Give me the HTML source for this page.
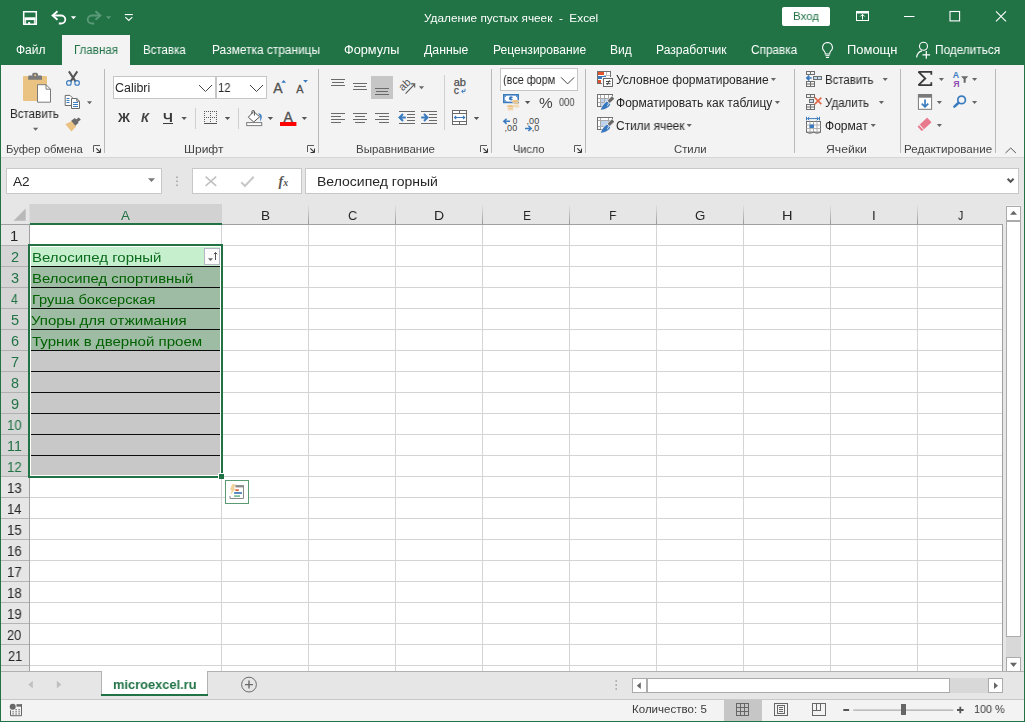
<!DOCTYPE html>
<html lang="ru"><head><meta charset="utf-8"><title>Excel</title>
<style>
html,body{margin:0;padding:0;}
body{width:1025px;height:722px;position:relative;overflow:hidden;background:#fff;font-family:"Liberation Sans", sans-serif;}
#app{position:absolute;left:0;top:0;width:1025px;height:722px;overflow:hidden;}
#app div,#app svg,#app span{position:absolute;}
.t{white-space:pre;line-height:1;transform-origin:0 0;display:block;will-change:transform;}
</style></head>
<body><div id="app">
<div style="left:0px;top:0px;width:1025px;height:65px;background:#217346;"></div>
<div style="left:0px;top:65px;width:1025px;height:92px;background:#f3f3f3;"></div>
<div style="left:0px;top:157px;width:1025px;height:1px;background:#d6d6d6;"></div>
<div style="left:0px;top:158px;width:1025px;height:47px;background:#e6e6e6;"></div>
<div style="left:62px;top:35px;width:68px;height:30px;background:#f3f3f3;"></div>
<div style="left:782px;top:7px;width:48px;height:19px;background:#fff;border-radius:2px;"></div>
<div style="left:104px;top:69px;width:1px;height:84px;background:#b9b9b9;"></div>
<div style="left:318px;top:69px;width:1px;height:84px;background:#b9b9b9;"></div>
<div style="left:491px;top:69px;width:1px;height:84px;background:#b9b9b9;"></div>
<div style="left:585px;top:69px;width:1px;height:84px;background:#b9b9b9;"></div>
<div style="left:794px;top:69px;width:1px;height:84px;background:#b9b9b9;"></div>
<div style="left:900px;top:69px;width:1px;height:84px;background:#b9b9b9;"></div>
<div style="left:995px;top:69px;width:1px;height:84px;background:#b9b9b9;"></div>
<div style="left:195px;top:108px;width:1px;height:21px;background:#d0d0d0;"></div>
<div style="left:238px;top:108px;width:1px;height:21px;background:#d0d0d0;"></div>
<div style="left:444px;top:75px;width:1px;height:55px;background:#d0d0d0;"></div>
<div style="left:113px;top:76px;width:103px;height:23px;background:#fff;box-sizing:border-box;border:1px solid #c6c6c6;"></div>
<div style="left:216px;top:76px;width:51px;height:23px;background:#fff;box-sizing:border-box;border:1px solid #c6c6c6;"></div>
<div style="left:163px;top:123px;width:10px;height:1px;background:#3b3b3b;"></div>
<div style="left:500px;top:68px;width:78px;height:23px;background:#fff;box-sizing:border-box;border:1px solid #c6c6c6;"></div>
<div style="left:371px;top:76px;width:22px;height:23px;background:#c6c6c6;"></div>
<div style="left:6px;top:168px;width:156px;height:26px;background:#fff;box-sizing:border-box;border:1px solid #c8c8c8;"></div>
<div style="left:192px;top:168px;width:110px;height:26px;background:#fff;box-sizing:border-box;border:1px solid #c8c8c8;"></div>
<div style="left:305px;top:168px;width:714px;height:26px;background:#fff;box-sizing:border-box;border:1px solid #c8c8c8;"></div>
<div style="left:1px;top:205px;width:1019px;height:466px;background:#fff;"></div>
<div style="left:1px;top:204px;width:1003px;height:20px;background:#e6e6e6;"></div>
<div style="left:1px;top:204px;width:29px;height:467px;background:#e6e6e6;"></div>
<div style="left:30px;top:204px;width:192px;height:19px;background:#d2d2d2;"></div>
<div style="left:308px;top:204px;width:1px;height:20px;background:linear-gradient(#e6e6e6,#c4c4c4 45%,#9a9a9a);"></div>
<div style="left:395px;top:204px;width:1px;height:20px;background:linear-gradient(#e6e6e6,#c4c4c4 45%,#9a9a9a);"></div>
<div style="left:482px;top:204px;width:1px;height:20px;background:linear-gradient(#e6e6e6,#c4c4c4 45%,#9a9a9a);"></div>
<div style="left:569px;top:204px;width:1px;height:20px;background:linear-gradient(#e6e6e6,#c4c4c4 45%,#9a9a9a);"></div>
<div style="left:656px;top:204px;width:1px;height:20px;background:linear-gradient(#e6e6e6,#c4c4c4 45%,#9a9a9a);"></div>
<div style="left:743px;top:204px;width:1px;height:20px;background:linear-gradient(#e6e6e6,#c4c4c4 45%,#9a9a9a);"></div>
<div style="left:830px;top:204px;width:1px;height:20px;background:linear-gradient(#e6e6e6,#c4c4c4 45%,#9a9a9a);"></div>
<div style="left:917px;top:204px;width:1px;height:20px;background:linear-gradient(#e6e6e6,#c4c4c4 45%,#9a9a9a);"></div>
<div style="left:29px;top:204px;width:1px;height:20px;background:#dcdcdc;"></div>
<div style="left:1px;top:224px;width:1002px;height:1px;background:#a0a0a0;"></div>
<div style="left:30px;top:223px;width:192px;height:2px;background:#217346;"></div>
<div style="left:29px;top:225px;width:1px;height:446px;background:#a0a0a0;"></div>
<div style="left:1002px;top:225px;width:1px;height:446px;background:#a0a0a0;"></div>
<div style="left:30px;top:245px;width:972px;height:1px;background:#d4d4d4;"></div>
<div style="left:1px;top:245px;width:28px;height:1px;background:#b4b4b4;"></div>
<div style="left:30px;top:266px;width:972px;height:1px;background:#d4d4d4;"></div>
<div style="left:1px;top:266px;width:28px;height:1px;background:#b4b4b4;"></div>
<div style="left:30px;top:287px;width:972px;height:1px;background:#d4d4d4;"></div>
<div style="left:1px;top:287px;width:28px;height:1px;background:#b4b4b4;"></div>
<div style="left:30px;top:308px;width:972px;height:1px;background:#d4d4d4;"></div>
<div style="left:1px;top:308px;width:28px;height:1px;background:#b4b4b4;"></div>
<div style="left:30px;top:329px;width:972px;height:1px;background:#d4d4d4;"></div>
<div style="left:1px;top:329px;width:28px;height:1px;background:#b4b4b4;"></div>
<div style="left:30px;top:350px;width:972px;height:1px;background:#d4d4d4;"></div>
<div style="left:1px;top:350px;width:28px;height:1px;background:#b4b4b4;"></div>
<div style="left:30px;top:371px;width:972px;height:1px;background:#d4d4d4;"></div>
<div style="left:1px;top:371px;width:28px;height:1px;background:#b4b4b4;"></div>
<div style="left:30px;top:392px;width:972px;height:1px;background:#d4d4d4;"></div>
<div style="left:1px;top:392px;width:28px;height:1px;background:#b4b4b4;"></div>
<div style="left:30px;top:413px;width:972px;height:1px;background:#d4d4d4;"></div>
<div style="left:1px;top:413px;width:28px;height:1px;background:#b4b4b4;"></div>
<div style="left:30px;top:434px;width:972px;height:1px;background:#d4d4d4;"></div>
<div style="left:1px;top:434px;width:28px;height:1px;background:#b4b4b4;"></div>
<div style="left:30px;top:455px;width:972px;height:1px;background:#d4d4d4;"></div>
<div style="left:1px;top:455px;width:28px;height:1px;background:#b4b4b4;"></div>
<div style="left:30px;top:476px;width:972px;height:1px;background:#d4d4d4;"></div>
<div style="left:1px;top:476px;width:28px;height:1px;background:#b4b4b4;"></div>
<div style="left:30px;top:497px;width:972px;height:1px;background:#d4d4d4;"></div>
<div style="left:1px;top:497px;width:28px;height:1px;background:#b4b4b4;"></div>
<div style="left:30px;top:518px;width:972px;height:1px;background:#d4d4d4;"></div>
<div style="left:1px;top:518px;width:28px;height:1px;background:#b4b4b4;"></div>
<div style="left:30px;top:539px;width:972px;height:1px;background:#d4d4d4;"></div>
<div style="left:1px;top:539px;width:28px;height:1px;background:#b4b4b4;"></div>
<div style="left:30px;top:560px;width:972px;height:1px;background:#d4d4d4;"></div>
<div style="left:1px;top:560px;width:28px;height:1px;background:#b4b4b4;"></div>
<div style="left:30px;top:581px;width:972px;height:1px;background:#d4d4d4;"></div>
<div style="left:1px;top:581px;width:28px;height:1px;background:#b4b4b4;"></div>
<div style="left:30px;top:602px;width:972px;height:1px;background:#d4d4d4;"></div>
<div style="left:1px;top:602px;width:28px;height:1px;background:#b4b4b4;"></div>
<div style="left:30px;top:623px;width:972px;height:1px;background:#d4d4d4;"></div>
<div style="left:1px;top:623px;width:28px;height:1px;background:#b4b4b4;"></div>
<div style="left:30px;top:644px;width:972px;height:1px;background:#d4d4d4;"></div>
<div style="left:1px;top:644px;width:28px;height:1px;background:#b4b4b4;"></div>
<div style="left:30px;top:665px;width:972px;height:1px;background:#d4d4d4;"></div>
<div style="left:1px;top:665px;width:28px;height:1px;background:#b4b4b4;"></div>
<div style="left:221px;top:225px;width:1px;height:446px;background:#d4d4d4;"></div>
<div style="left:308px;top:225px;width:1px;height:446px;background:#d4d4d4;"></div>
<div style="left:395px;top:225px;width:1px;height:446px;background:#d4d4d4;"></div>
<div style="left:482px;top:225px;width:1px;height:446px;background:#d4d4d4;"></div>
<div style="left:569px;top:225px;width:1px;height:446px;background:#d4d4d4;"></div>
<div style="left:656px;top:225px;width:1px;height:446px;background:#d4d4d4;"></div>
<div style="left:743px;top:225px;width:1px;height:446px;background:#d4d4d4;"></div>
<div style="left:830px;top:225px;width:1px;height:446px;background:#d4d4d4;"></div>
<div style="left:917px;top:225px;width:1px;height:446px;background:#d4d4d4;"></div>
<div style="left:1px;top:246px;width:27px;height:230px;background:#d5d5d5;"></div>
<div style="left:1px;top:266px;width:27px;height:1px;background:#b0b0b0;"></div>
<div style="left:1px;top:287px;width:27px;height:1px;background:#b0b0b0;"></div>
<div style="left:1px;top:308px;width:27px;height:1px;background:#b0b0b0;"></div>
<div style="left:1px;top:329px;width:27px;height:1px;background:#b0b0b0;"></div>
<div style="left:1px;top:350px;width:27px;height:1px;background:#b0b0b0;"></div>
<div style="left:1px;top:371px;width:27px;height:1px;background:#b0b0b0;"></div>
<div style="left:1px;top:392px;width:27px;height:1px;background:#b0b0b0;"></div>
<div style="left:1px;top:413px;width:27px;height:1px;background:#b0b0b0;"></div>
<div style="left:1px;top:434px;width:27px;height:1px;background:#b0b0b0;"></div>
<div style="left:1px;top:455px;width:27px;height:1px;background:#b0b0b0;"></div>
<div style="left:30px;top:246px;width:191px;height:230px;background:#fff;"></div>
<div style="left:31px;top:247px;width:189px;height:19px;background:#c6efce;"></div>
<div style="left:31px;top:267px;width:189px;height:84px;background:#9ebba3;"></div>
<div style="left:31px;top:351px;width:189px;height:124px;background:#c8c8c8;"></div>
<div style="left:31px;top:266px;width:189px;height:1px;background:#0c0c0c;"></div>
<div style="left:31px;top:287px;width:189px;height:1px;background:#0c0c0c;"></div>
<div style="left:31px;top:308px;width:189px;height:1px;background:#0c0c0c;"></div>
<div style="left:31px;top:329px;width:189px;height:1px;background:#0c0c0c;"></div>
<div style="left:31px;top:350px;width:189px;height:1px;background:#0c0c0c;"></div>
<div style="left:31px;top:371px;width:189px;height:1px;background:#0c0c0c;"></div>
<div style="left:31px;top:392px;width:189px;height:1px;background:#0c0c0c;"></div>
<div style="left:31px;top:413px;width:189px;height:1px;background:#0c0c0c;"></div>
<div style="left:31px;top:434px;width:189px;height:1px;background:#0c0c0c;"></div>
<div style="left:31px;top:455px;width:189px;height:1px;background:#0c0c0c;"></div>
<div style="left:28px;top:244px;width:195px;height:2px;background:#217346;"></div>
<div style="left:28px;top:476px;width:190px;height:2px;background:#217346;"></div>
<div style="left:28px;top:244px;width:2px;height:234px;background:#217346;"></div>
<div style="left:221px;top:244px;width:2px;height:229px;background:#217346;"></div>
<div style="left:218px;top:473px;width:6px;height:6px;background:#fff;"></div>
<div style="left:219px;top:474px;width:5px;height:5px;background:#217346;"></div>
<div style="left:204px;top:248px;width:16px;height:17px;background:#fbfbfb;box-sizing:border-box;border:1px solid #b4b6c2;"></div>
<div style="left:225px;top:480px;width:24px;height:24px;background:#fff;box-sizing:border-box;border:1px solid #5a9b73;"></div>
<div style="left:1003px;top:204px;width:21px;height:467px;background:#e6e6e6;"></div>
<div style="left:1006px;top:205px;width:15px;height:466px;background:#f0f0f0;"></div>
<div style="left:1px;top:671px;width:1023px;height:28px;background:#e6e6e6;"></div>
<div style="left:1px;top:671px;width:1023px;height:1px;background:#b1b1b1;"></div>
<div style="left:101px;top:671px;width:107px;height:24px;background:#fff;"></div>
<div style="left:101px;top:694px;width:107px;height:2px;background:#217346;"></div>
<div style="left:101px;top:671px;width:1px;height:23px;background:#b1b1b1;"></div>
<div style="left:207px;top:671px;width:1px;height:23px;background:#b1b1b1;"></div>
<div style="left:1px;top:699px;width:1023px;height:1px;background:#c8c8c8;"></div>
<div style="left:1px;top:700px;width:1023px;height:21px;background:#f3f3f3;"></div>
<svg style="left:0;top:0" width="1025" height="722" viewBox="0 0 1025 722"><path d="M23.700 11.700h12.600v12.600h-12.600z" fill="none" stroke="#fff" stroke-width="1.5" /><rect x="24.4" y="17.3" width="11.2" height="2.8" fill="#fff" /><rect x="24.4" y="20" width="1.7" height="4.3" fill="#fff" opacity=".85"/><rect x="33.9" y="20" width="1.7" height="4.3" fill="#fff" opacity=".85"/><rect x="28.2" y="22" width="1.9" height="2.4" fill="#fff" /><path d="M57.500 11.300l-4.900 4.200 4.900 4.200" fill="none" stroke="#fff" stroke-width="1.9" /><path d="M53 15.500h8a4.300 4 0 0 1 0 8h-2.200" fill="none" stroke="#fff" stroke-width="1.8" /><path d="M70.8 16.2h5.4l-2.7 3z" fill="#fff" stroke="none" stroke-width="1" /><path d="M95.500 11.300l4.900 4.200-4.900 4.200" fill="none" stroke="#5a9a78" stroke-width="1.9" /><path d="M100 15.500h-8a4.300 4 0 0 0 0 8h2.200" fill="none" stroke="#5a9a78" stroke-width="1.8" /><path d="M106 16.2h5.2l-2.6 3z" fill="#5a9a78" stroke="none" stroke-width="1" /><rect x="124.8" y="14" width="8" height="1.1" fill="#fff" /><path d="M125.3 17.2l3.5 3.3 3.5-3.3" fill="none" stroke="#fff" stroke-width="1.1" /><rect x="856.5" y="11.5" width="12" height="9" fill="none" stroke="#fff" stroke-width="1"/><rect x="856.5" y="11.5" width="12" height="2" fill="#fff" /><path d="M862.5 19.5v-5M860.3 16.5l2.2-2.2 2.2 2.2" fill="none" stroke="#fff" stroke-width="1" /><rect x="904" y="16" width="10.5" height="1" fill="#fff" /><rect x="950" y="11.5" width="9.6" height="9.4" fill="none" stroke="#fff" stroke-width="1.1"/><path d="M996 11.3l10 10M1006 11.3l-10 10" fill="none" stroke="#fff" stroke-width="1.1" /><path d="M827.5 42.5a4.9 4.9 0 0 1 3.2 8.6c-.8.8-1 1.6-1 2.9h-4.4c0-1.300-.2-2.100-1-2.900a4.9 4.9 0 0 1 3.200-8.600z" fill="none" stroke="#fff" stroke-width="1.1" /><rect x="825.4" y="55.2" width="4.2" height="1" fill="#fff" /><rect x="826" y="57" width="3" height="1" fill="#fff" /><circle cx="923.5" cy="46.3" r="4" fill="none" stroke="#fff" stroke-width="1.1"/><path d="M916.6 57.5c.6-4 3.300-6.200 5.400-6.600" fill="none" stroke="#fff" stroke-width="1.1" /><path d="M922.5 54.9h7.6M926.3 51.1v7.6" fill="none" stroke="#fff" stroke-width="1.2" /><path d="M24 76h22a1 1 0 0 1 1 1v23a1 1 0 0 1-1 1h-22a1 1 0 0 1-1-1v-23a1 1 0 0 1 1-1z" fill="#eac282" stroke="none" stroke-width="1" /><path d="M28.2 79.800v-3.400a1 1 0 0 1 1-1h3v-1.200a1.500 1.500 0 0 1 1.500-1.500h2.800a1.500 1.500 0 0 1 1.500 1.500v1.200h3a1 1 0 0 1 1 1v3.400z" fill="#7a7a7a" stroke="none" stroke-width="1" /><circle cx="35.1" cy="75.2" r="1" fill="#eac282" stroke="none" stroke-width="1"/><path d="M37.5 84.700h8.500l4.500 4.500v13h-13z" fill="#fff" stroke="#7a7a7a" stroke-width="1" /><path d="M46 84.700v4.500h4.500" fill="none" stroke="#7a7a7a" stroke-width="1" /><path d="M33 127.8h5.2l-2.6 3z" fill="#666" stroke="none" stroke-width="1" /><path d="M68.900 71.400l6.600 10M77.300 71.400l-6.600 10" fill="none" stroke="#555" stroke-width="2" /><circle cx="68.9" cy="82.9" r="2.3" fill="none" stroke="#3a7bbf" stroke-width="1.1"/><circle cx="77.1" cy="82.9" r="2.3" fill="none" stroke="#3a7bbf" stroke-width="1.1"/><path d="M65.200 95.400h4.800l2.300 2.300v7.800h-7.100z" fill="#fff" stroke="#6a6a6a" stroke-width="1" /><line x1="66.5" y1="98.5" x2="69.5" y2="98.5" stroke="#3a7bbf" stroke-width="1" stroke-linecap="butt"/><line x1="66.5" y1="100.5" x2="69.5" y2="100.5" stroke="#3a7bbf" stroke-width="1" stroke-linecap="butt"/><line x1="66.5" y1="102.5" x2="69.5" y2="102.5" stroke="#3a7bbf" stroke-width="1" stroke-linecap="butt"/><path d="M71.500 98.500h5.300l2.700 2.700v7.300h-8z" fill="#fff" stroke="#6a6a6a" stroke-width="1" /><path d="M76.800 98.500v2.700h2.700" fill="none" stroke="#6a6a6a" stroke-width="1" /><line x1="73" y1="102.5" x2="78" y2="102.5" stroke="#3a7bbf" stroke-width="1" stroke-linecap="butt"/><line x1="73" y1="104.5" x2="78" y2="104.5" stroke="#3a7bbf" stroke-width="1" stroke-linecap="butt"/><line x1="73" y1="106.5" x2="78" y2="106.5" stroke="#3a7bbf" stroke-width="1" stroke-linecap="butt"/><path d="M87 101.2h5l-2.5 3z" fill="#666" stroke="none" stroke-width="1" /><path d="M65.300 124.300l6.600-3.300 4.200 5.400-4.600 5.200z" fill="#eac282" stroke="none" stroke-width="1" /><path d="M71.200 120.800l3.600-2.800 3.800 4.700-3.300 3.100z" fill="#6a6a6a" stroke="none" stroke-width="1" /><path d="M75.500 119.700l3.400-2.300 1.900 2.300-3.300 2.500z" fill="#6a6a6a" stroke="none" stroke-width="1" /><path d="M100 145.5H93.5V152" fill="none" stroke="#5a5a5a" stroke-width="1" /><path d="M96.3 148.3L100.2 152.2" fill="none" stroke="#333" stroke-width="1.1" /><path d="M100.5 148.6V152.5H96.6" fill="none" stroke="#333" stroke-width="1" /><path d="M314 145.5H307.5V152" fill="none" stroke="#5a5a5a" stroke-width="1" /><path d="M310.3 148.3L314.2 152.2" fill="none" stroke="#333" stroke-width="1.1" /><path d="M314.5 148.6V152.5H310.6" fill="none" stroke="#333" stroke-width="1" /><path d="M487 145.5H480.5V152" fill="none" stroke="#5a5a5a" stroke-width="1" /><path d="M483.3 148.3L487.2 152.2" fill="none" stroke="#333" stroke-width="1.1" /><path d="M487.5 148.6V152.5H483.6" fill="none" stroke="#333" stroke-width="1" /><path d="M581 145.5H574.5V152" fill="none" stroke="#5a5a5a" stroke-width="1" /><path d="M577.3 148.3L581.2 152.2" fill="none" stroke="#333" stroke-width="1.1" /><path d="M581.5 148.6V152.5H577.6" fill="none" stroke="#333" stroke-width="1" /><path d="M199 85l6.500 6.500 6.500-6.500" fill="none" stroke="#444" stroke-width="1" /><path d="M250 85l6.500 6.500 6.500-6.500" fill="none" stroke="#444" stroke-width="1" /><text x="273.2" y="92.8" font-size="14" fill="#505050" font-family='"Liberation Sans",sans-serif' stroke="#505050" stroke-width=".3">A</text><path d="M281.300 82.700l2.400-2.800 2.400 2.800z" fill="#3a7bbf" stroke="none" stroke-width="1" /><text x="296.2" y="92.8" font-size="10.8" fill="#505050" font-family='"Liberation Sans",sans-serif' stroke="#505050" stroke-width=".3">A</text><path d="M303.100 79.900h4.800l-2.400 2.800z" fill="#3a7bbf" stroke="none" stroke-width="1" /><path d="M181.4 116.9h5.4l-2.7 3.1z" fill="#555" stroke="none" stroke-width="1" /><rect x="204" y="111" width="1" height="1" fill="#5a5a5a" /><rect x="206" y="111" width="1" height="1" fill="#5a5a5a" /><rect x="208" y="111" width="1" height="1" fill="#5a5a5a" /><rect x="210" y="111" width="1" height="1" fill="#5a5a5a" /><rect x="212" y="111" width="1" height="1" fill="#5a5a5a" /><rect x="214" y="111" width="1" height="1" fill="#5a5a5a" /><rect x="216" y="111" width="1" height="1" fill="#5a5a5a" /><rect x="204" y="113" width="1" height="1" fill="#5a5a5a" /><rect x="210" y="113" width="1" height="1" fill="#5a5a5a" /><rect x="216" y="113" width="1" height="1" fill="#5a5a5a" /><rect x="204" y="115" width="1" height="1" fill="#5a5a5a" /><rect x="210" y="115" width="1" height="1" fill="#5a5a5a" /><rect x="216" y="115" width="1" height="1" fill="#5a5a5a" /><rect x="204" y="117" width="1" height="1" fill="#5a5a5a" /><rect x="206" y="117" width="1" height="1" fill="#5a5a5a" /><rect x="208" y="117" width="1" height="1" fill="#5a5a5a" /><rect x="210" y="117" width="1" height="1" fill="#5a5a5a" /><rect x="212" y="117" width="1" height="1" fill="#5a5a5a" /><rect x="214" y="117" width="1" height="1" fill="#5a5a5a" /><rect x="216" y="117" width="1" height="1" fill="#5a5a5a" /><rect x="204" y="119" width="1" height="1" fill="#5a5a5a" /><rect x="210" y="119" width="1" height="1" fill="#5a5a5a" /><rect x="216" y="119" width="1" height="1" fill="#5a5a5a" /><rect x="204" y="121" width="1" height="1" fill="#5a5a5a" /><rect x="210" y="121" width="1" height="1" fill="#5a5a5a" /><rect x="216" y="121" width="1" height="1" fill="#5a5a5a" /><rect x="204" y="123" width="13" height="1" fill="#555" /><path d="M224.8 116.9h5.4l-2.7 3.1z" fill="#555" stroke="none" stroke-width="1" /><rect x="246.7" y="122.6" width="15" height="3" fill="#fff" stroke="#7a7a7a" stroke-width="1"/><path d="M253.700 111.600l6 5.200-6 5.200-5.400-4.800z" fill="#fff" stroke="#555" stroke-width="1" /><path d="M251.900 114v-2.600a.8.8 0 0 1 .8-.8h.9a.8.8 0 0 1 .8.8v4.200" fill="none" stroke="#555" stroke-width="1" /><path d="M258.200 113.300C261.600 113.600 263.500 117 260 121.500L260.300 116.700z" fill="#3a7bbf" stroke="none" stroke-width="1" /><path d="M267.7 116.9h5.4l-2.7 3.1z" fill="#555" stroke="none" stroke-width="1" /><text x="283.4" y="121.8" font-size="14" fill="#505050" font-family='"Liberation Sans",sans-serif' stroke="#505050" stroke-width=".3">A</text><rect x="280" y="122" width="16.4" height="4" fill="#ff0000" /><path d="M301.7 116.9h5.4l-2.7 3.1z" fill="#555" stroke="none" stroke-width="1" /><rect x="331" y="79" width="14" height="1" fill="#6a6a6a" /><rect x="332" y="82" width="12" height="1" fill="#6a6a6a" /><rect x="331" y="85" width="14" height="1" fill="#6a6a6a" /><rect x="353" y="83" width="14" height="1" fill="#6a6a6a" /><rect x="354" y="86" width="12" height="1" fill="#6a6a6a" /><rect x="353" y="89" width="14" height="1" fill="#6a6a6a" /><rect x="375" y="88" width="14" height="1" fill="#6a6a6a" /><rect x="376" y="91" width="12" height="1" fill="#6a6a6a" /><rect x="375" y="94" width="14" height="1" fill="#6a6a6a" /><rect x="331" y="113" width="14" height="1" fill="#6a6a6a" /><rect x="353" y="113" width="14" height="1" fill="#6a6a6a" /><rect x="375" y="113" width="14" height="1" fill="#6a6a6a" /><rect x="331" y="116" width="10" height="1" fill="#6a6a6a" /><rect x="355" y="116" width="10" height="1" fill="#6a6a6a" /><rect x="379" y="116" width="10" height="1" fill="#6a6a6a" /><rect x="331" y="119" width="14" height="1" fill="#6a6a6a" /><rect x="353" y="119" width="14" height="1" fill="#6a6a6a" /><rect x="375" y="119" width="14" height="1" fill="#6a6a6a" /><rect x="331" y="122" width="10" height="1" fill="#6a6a6a" /><rect x="355" y="122" width="10" height="1" fill="#6a6a6a" /><rect x="379" y="122" width="10" height="1" fill="#6a6a6a" /><text transform="translate(402.800 91.600) rotate(-45)" font-size="11" fill="#555" font-family='"Liberation Sans",sans-serif'>ab</text><path d="M405.600 93.600l8.800-9.200" fill="none" stroke="#555" stroke-width="1.1" /><path d="M411 83.900h3.700v3.700" fill="none" stroke="#555" stroke-width="1.1" /><path d="M418.9 86.2h5.2l-2.6 3z" fill="#666" stroke="none" stroke-width="1" /><text x="453.7" y="86.3" font-size="10.4" fill="#505050" font-family='"Liberation Sans",sans-serif' stroke="#505050" stroke-width=".25" textLength="12.3" lengthAdjust="spacingAndGlyphs">ab</text><text x="453.7" y="93.5" font-size="10.4" fill="#505050" font-family='"Liberation Sans",sans-serif' stroke="#505050" stroke-width=".25">c</text><path d="M465 88.800v2.600h-3.200M463.300 89.800l-1.700 1.600 1.700 1.600" fill="none" stroke="#3a7bbf" stroke-width="1" /><rect x="399" y="111" width="16" height="1" fill="#6a6a6a" /><rect x="399" y="123" width="16" height="1" fill="#6a6a6a" /><rect x="407" y="114" width="8" height="1" fill="#6a6a6a" /><rect x="407" y="117" width="8" height="1" fill="#6a6a6a" /><rect x="407" y="120" width="8" height="1" fill="#6a6a6a" /><rect x="421" y="111" width="16" height="1" fill="#6a6a6a" /><rect x="421" y="123" width="16" height="1" fill="#6a6a6a" /><rect x="429" y="114" width="8" height="1" fill="#6a6a6a" /><rect x="429" y="117" width="8" height="1" fill="#6a6a6a" /><rect x="429" y="120" width="8" height="1" fill="#6a6a6a" /><path d="M405.800 117.500h-5M403 114l-3.500 3.500 3.500 3.500" fill="none" stroke="#3a7bbf" stroke-width="2" /><path d="M421.200 117.500h5M424 114l3.500 3.500-3.500 3.500" fill="none" stroke="#3a7bbf" stroke-width="2" /><rect x="452.5" y="110.5" width="14" height="14" fill="#fff" stroke="#6a6a6a" stroke-width="1"/><line x1="452.5" y1="113.5" x2="466.5" y2="113.5" stroke="#6a6a6a" stroke-width="1" stroke-linecap="butt"/><line x1="452.5" y1="121.5" x2="466.5" y2="121.5" stroke="#6a6a6a" stroke-width="1" stroke-linecap="butt"/><line x1="459.5" y1="110.5" x2="459.5" y2="113.5" stroke="#6a6a6a" stroke-width="1" stroke-linecap="butt"/><line x1="459.5" y1="121.5" x2="459.5" y2="124.5" stroke="#6a6a6a" stroke-width="1" stroke-linecap="butt"/><path d="M454.600 117.500h10M456.200 115.900l-1.700 1.600 1.700 1.600M463 115.900l1.700 1.600-1.700 1.600" fill="none" stroke="#3a7bbf" stroke-width="1.1" /><path d="M473.8 117h5.4l-2.7 3.1z" fill="#555" stroke="none" stroke-width="1" /><path d="M561 77.300l6.600 6.600 6.600-6.600" fill="none" stroke="#444" stroke-width="1" /><rect x="503.8" y="94.8" width="14.4" height="7.6" fill="#fff" stroke="#3a7bbf" stroke-width="1.6"/><path d="M504.6 95.6h2.2l-2.2 2.2z" fill="#3a7bbf" stroke="none" stroke-width="1" /><path d="M517.4 95.6h-2.2l2.2 2.2z" fill="#3a7bbf" stroke="none" stroke-width="1" /><path d="M504.6 101.6h2.2l-2.2 -2.2z" fill="#3a7bbf" stroke="none" stroke-width="1" /><path d="M517.4 101.6h-2.2l2.2 -2.2z" fill="#3a7bbf" stroke="none" stroke-width="1" /><circle cx="511" cy="98.4" r="2.1" fill="#3a7bbf" stroke="none" stroke-width="1"/><path d="M511 98.400l2.300-1v2z" fill="#fff" stroke="none" stroke-width="1" /><ellipse cx="515.4" cy="101.2" rx="3.7" ry="1.5" fill="#ecc07c" stroke="#f3f3f3" stroke-width=".5"/><rect x="513.6" y="103.2" width="5.2" height="0.8" fill="#ecc07c" rx=".4"/><rect x="513.9200000000001" y="104.8" width="5.2" height="0.8" fill="#ecc07c" rx=".4"/><rect x="514.24" y="106.4" width="5.2" height="0.8" fill="#ecc07c" rx=".4"/><ellipse cx="510.5" cy="106.3" rx="3.7" ry="1.5" fill="#ecc07c" stroke="#f3f3f3" stroke-width=".5"/><rect x="507.6" y="108.2" width="5.8" height="0.8" fill="#ecc07c" rx=".4"/><rect x="507.6" y="109.5" width="5.8" height="0.8" fill="#ecc07c" rx=".4"/><path d="M524.9 101h5.4l-2.7 3.1z" fill="#555" stroke="none" stroke-width="1" /><path d="M510 121.300h-6.300M506.600 118.700l-2.800 2.600 2.800 2.600" fill="none" stroke="#3a7bbf" stroke-width="1.5" /><text x="512.8" y="123.9" font-size="8.2" fill="#444" font-family='"Liberation Sans",sans-serif' >0</text><text x="504.6" y="130.9" font-size="8.2" fill="#444" font-family='"Liberation Sans",sans-serif' textLength="12.6" lengthAdjust="spacingAndGlyphs">,00</text><text x="526.6" y="123.9" font-size="8.2" fill="#444" font-family='"Liberation Sans",sans-serif' textLength="12.6" lengthAdjust="spacingAndGlyphs">,00</text><path d="M525 128.400h6.300M528.400 125.800l2.800 2.600-2.800 2.600" fill="none" stroke="#3a7bbf" stroke-width="1.5" /><text x="531.7" y="130.9" font-size="8.2" fill="#444" font-family='"Liberation Sans",sans-serif' textLength="7.5" lengthAdjust="spacingAndGlyphs">,0</text><rect x="597.5" y="71.5" width="13" height="12" fill="#fff" stroke="#707070" stroke-width="1"/><line x1="606.5" y1="72" x2="606.5" y2="75.5" stroke="#c0c0c0" stroke-width="1" stroke-linecap="butt"/><line x1="604" y1="75.5" x2="610" y2="75.5" stroke="#c0c0c0" stroke-width="1" stroke-linecap="butt"/><rect x="598" y="72" width="6" height="3" fill="#e0532a" /><rect x="598" y="76" width="8" height="3" fill="#3d78b8" /><rect x="598" y="80" width="3" height="3" fill="#e0532a" /><rect x="602" y="77" width="12" height="11" fill="#f3f3f3" /><rect x="603.5" y="78.5" width="9" height="8" fill="#fff" stroke="#6a6a6a" stroke-width="1"/><path d="M606 81.500h4.600M606 83.700h4.600M609.500 80.200l-2.400 4.800" fill="none" stroke="#3a3a3a" stroke-width="0.9" /><rect x="597.5" y="94.5" width="15" height="12" fill="#fff" stroke="#707070" stroke-width="1"/><rect x="601" y="99" width="7.5" height="7.5" fill="#bdd4ec" /><line x1="600.5" y1="94.5" x2="600.5" y2="106.5" stroke="#a8a8a8" stroke-width="1" stroke-linecap="butt"/><line x1="604.5" y1="94.5" x2="604.5" y2="106.5" stroke="#a8a8a8" stroke-width="1" stroke-linecap="butt"/><line x1="608.5" y1="94.5" x2="608.5" y2="106.5" stroke="#a8a8a8" stroke-width="1" stroke-linecap="butt"/><line x1="597.5" y1="98.5" x2="612.5" y2="98.5" stroke="#a8a8a8" stroke-width="1" stroke-linecap="butt"/><line x1="597.5" y1="102.5" x2="612.5" y2="102.5" stroke="#a8a8a8" stroke-width="1" stroke-linecap="butt"/><rect x="597.5" y="94.5" width="15" height="12" fill="none" stroke="#707070" stroke-width="1"/><path d="M614 96.5V108.0H604L609 101.5z" fill="#f3f3f3" stroke="none" stroke-width="1" /><g transform="translate(600.8 109.8) rotate(-45)"><path d="M0 0C2.500-1.300 6-2.300 10-1.700L11.200 2C9.500 4.400 4.500 3.600 0 0z" fill="#3a78bd" stroke="#f3f3f3" stroke-width="1.2" paint-order="stroke"/><rect x="11.1" y="-1.6" width="6.3" height="3.2" fill="#6a6a6a" stroke="#f3f3f3" stroke-width="1.2" paint-order="stroke"/><path d="M7.200 1.800c1.200.300 2.200-.200 2.600-1.200" fill="none" stroke="#fff" stroke-width=".8"/></g><rect x="597.5" y="117.5" width="15" height="12" fill="#fff" stroke="#707070" stroke-width="1"/><rect x="601" y="121" width="7.5" height="5.5" fill="#bdd4ec" /><line x1="600.5" y1="117.5" x2="600.5" y2="129.5" stroke="#a8a8a8" stroke-width="1" stroke-linecap="butt"/><line x1="608.5" y1="117.5" x2="608.5" y2="129.5" stroke="#a8a8a8" stroke-width="1" stroke-linecap="butt"/><line x1="597.5" y1="120.5" x2="612.5" y2="120.5" stroke="#a8a8a8" stroke-width="1" stroke-linecap="butt"/><line x1="597.5" y1="126.5" x2="612.5" y2="126.5" stroke="#a8a8a8" stroke-width="1" stroke-linecap="butt"/><rect x="597.5" y="117.5" width="15" height="12" fill="none" stroke="#707070" stroke-width="1"/><path d="M614 119.5V131.0H604L609 124.5z" fill="#f3f3f3" stroke="none" stroke-width="1" /><g transform="translate(600.8 132.8) rotate(-45)"><path d="M0 0C2.500-1.300 6-2.300 10-1.700L11.200 2C9.500 4.400 4.500 3.600 0 0z" fill="#3a78bd" stroke="#f3f3f3" stroke-width="1.2" paint-order="stroke"/><rect x="11.1" y="-1.6" width="6.3" height="3.2" fill="#6a6a6a" stroke="#f3f3f3" stroke-width="1.2" paint-order="stroke"/><path d="M7.200 1.800c1.200.300 2.200-.200 2.600-1.200" fill="none" stroke="#fff" stroke-width=".8"/></g><rect x="806.5" y="71.5" width="8" height="3" fill="none" stroke="#6e6e6e" stroke-width="1"/><line x1="810.5" y1="71.5" x2="810.5" y2="74.5" stroke="#6e6e6e" stroke-width="1" stroke-linecap="butt"/><rect x="813.5" y="76.5" width="8" height="3" fill="#c3d9f0" stroke="#6e6e6e" stroke-width="1"/><line x1="817.5" y1="76.5" x2="817.5" y2="79.5" stroke="#6e6e6e" stroke-width="1" stroke-linecap="butt"/><rect x="806.5" y="81.5" width="8" height="5" fill="none" stroke="#6e6e6e" stroke-width="1"/><line x1="810.5" y1="81.5" x2="810.5" y2="86.5" stroke="#6e6e6e" stroke-width="1" stroke-linecap="butt"/><line x1="806.5" y1="84.0" x2="814.5" y2="84.0" stroke="#6e6e6e" stroke-width="1" stroke-linecap="butt"/><path d="M811.700 78h-4.300M809.300 75.700l-2.400 2.300 2.400 2.300" fill="none" stroke="#3a78bd" stroke-width="1.7" /><rect x="806.5" y="94.5" width="8" height="3" fill="none" stroke="#6e6e6e" stroke-width="1"/><line x1="810.5" y1="94.5" x2="810.5" y2="97.5" stroke="#6e6e6e" stroke-width="1" stroke-linecap="butt"/><rect x="809.5" y="99.5" width="4" height="3" fill="#c3d9f0" stroke="#6e6e6e" stroke-width="1"/><rect x="806.5" y="104.5" width="8" height="5" fill="none" stroke="#6e6e6e" stroke-width="1"/><line x1="810.5" y1="104.5" x2="810.5" y2="109.5" stroke="#6e6e6e" stroke-width="1" stroke-linecap="butt"/><line x1="806.5" y1="107.0" x2="814.5" y2="107.0" stroke="#6e6e6e" stroke-width="1" stroke-linecap="butt"/><path d="M814.800 97.700l6.500 6.500M821.300 97.700l-6.500 6.500" fill="none" stroke="#e0694a" stroke-width="1.7" /><path d="M806.500 116.800v3.600M819.500 116.800v3.600M807.500 118.600h11M809.300 117l-1.800 1.600 1.800 1.600M816.700 117l1.800 1.600-1.800 1.600" fill="none" stroke="#3a7bbf" stroke-width="1" /><rect x="806.5" y="121.5" width="14" height="10.6" fill="#fff" stroke="#6e6e6e" stroke-width="1"/><line x1="810.0" y1="121.5" x2="810.0" y2="132.1" stroke="#b0b0b0" stroke-width="1" stroke-linecap="butt"/><line x1="813.5" y1="121.5" x2="813.5" y2="132.1" stroke="#b0b0b0" stroke-width="1" stroke-linecap="butt"/><line x1="817.0" y1="121.5" x2="817.0" y2="132.1" stroke="#b0b0b0" stroke-width="1" stroke-linecap="butt"/><line x1="806.5" y1="125.03" x2="820.5" y2="125.03" stroke="#b0b0b0" stroke-width="1" stroke-linecap="butt"/><line x1="806.5" y1="128.56" x2="820.5" y2="128.56" stroke="#b0b0b0" stroke-width="1" stroke-linecap="butt"/><rect x="809.5" y="124.5" width="4.4" height="3.5" fill="#3a7bbf" /><path d="M806.500 132.100c2.300 1.500 4.700 1.500 7 0c2.300 1.500 4.700 1.500 7 0" fill="none" stroke="#6e6e6e" stroke-width="1" /><path d="M882.6 78h5.2l-2.6 3z" fill="#666" stroke="none" stroke-width="1" /><path d="M878.8 101h5.2l-2.6 3z" fill="#666" stroke="none" stroke-width="1" /><path d="M870.6 124h5.2l-2.6 3z" fill="#666" stroke="none" stroke-width="1" /><path d="M770.8 78h5.2l-2.6 3z" fill="#666" stroke="none" stroke-width="1" /><path d="M774.8 101h5.2l-2.6 3z" fill="#666" stroke="none" stroke-width="1" /><path d="M686.6 124h5.2l-2.6 3z" fill="#666" stroke="none" stroke-width="1" /><path d="M931.300 74.800v-2.900h-12.800l6.800 6.600-6.800 6.600h12.800v-2.900" fill="none" stroke="#3a3a3a" stroke-width="1.8" stroke-linejoin="miter" stroke-miterlimit="1.5"/><path d="M938.8 78h5.2l-2.6 3z" fill="#666" stroke="none" stroke-width="1" /><text x="952.8" y="77.7" font-size="8.8" fill="#3a7bbf" font-family='"Liberation Sans",sans-serif' font-weight="bold">A</text><text x="953.2" y="87" font-size="8.8" fill="#8e4fb0" font-family='"Liberation Sans",sans-serif' font-weight="bold">Я</text><path d="M961 76.200h7.300l-2.600 2.700v3.900h-2.100v-3.900z" fill="#6a6a6a" stroke="none" stroke-width="1" /><path d="M972 78h5.2l-2.6 3z" fill="#666" stroke="none" stroke-width="1" /><rect x="918.4" y="94.5" width="13.2" height="14.8" fill="#fff" stroke="#7a7a7a" stroke-width="1"/><rect x="918.4" y="94.5" width="13.2" height="3.2" fill="#7a7a7a" /><path d="M925 99.600v7M921.700 103.600l3.300 3.200 3.300-3.200" fill="none" stroke="#3a7bbf" stroke-width="1.7" /><path d="M936.8 101h5.2l-2.6 3z" fill="#666" stroke="none" stroke-width="1" /><circle cx="961.6" cy="99.9" r="3.8" fill="none" stroke="#3a7bbf" stroke-width="1.7"/><line x1="958.6" y1="102.8" x2="954.4" y2="106.6" stroke="#3a7bbf" stroke-width="2.5" stroke-linecap="round"/><path d="M972 101h5.2l-2.6 3z" fill="#666" stroke="none" stroke-width="1" /><g transform="translate(924.5 124.4) rotate(-43)"><rect x="-6.6" y="-3.2" width="13.2" height="6.4" rx=".6" fill="#e97a8e"/><rect x="-4.5" y="-3.2" width=".9" height="6.4" fill="#f3f3f3"/></g><path d="M936.8 124h5.2l-2.6 3z" fill="#666" stroke="none" stroke-width="1" /><path d="M1005.500 153l5.200-5 5.200 5" fill="none" stroke="#555" stroke-width="1" /><path d="M148 178.200h7l-3.500 3.800z" fill="#777" stroke="none" stroke-width="1" /><rect x="176.2" y="176.5" width="1.6" height="1.6" fill="#a6a6a6" /><rect x="176.2" y="180.5" width="1.6" height="1.6" fill="#a6a6a6" /><rect x="176.2" y="184.5" width="1.6" height="1.6" fill="#a6a6a6" /><path d="M205.600 176.600l10.600 9.300M216.200 176.600l-10.600 9.300" fill="none" stroke="#c0c0c0" stroke-width="1.5" /><path d="M241.300 182.300l3.600 3.700 8.800-9.300" fill="none" stroke="#c8c8c8" stroke-width="2.1" /><text x="278.5" y="186" font-size="14" font-style="italic" font-weight="bold" fill="#555" font-family='"Liberation Serif",serif'>f</text><text x="283.3" y="186.2" font-size="10" font-style="italic" font-weight="bold" fill="#555" font-family='"Liberation Serif",serif'>x</text><path d="M1007.600 178.800l3 3 3-3" fill="none" stroke="#555" stroke-width="2" /><path d="M25.700 208.500v12.200h-12.200z" fill="#b9b9b9" stroke="none" stroke-width="1" /><path d="M208 258.200h5l-2.500 2.800z" fill="#666" stroke="none" stroke-width="1" /><path d="M215.500 260v-7.500M213.800 254.200l1.700-1.700 1.700 1.700" fill="none" stroke="#555" stroke-width="1" /><path d="M232 484.300h3.800l-2 4.200h2l-5.600 6.400 1.600-4.800h-1.800z" fill="#f0d39c" stroke="none" stroke-width="1" /><rect x="235.4" y="485.1" width="8.6" height="2.3" fill="#8a8a8a" /><path d="M243.500 487v11.500h-13.500v-2.500" fill="none" stroke="#8a8a8a" stroke-width="1" /><rect x="235.4" y="489.3" width="3.4" height="1.6" fill="#d9532c" /><rect x="234.1" y="492.1" width="7.8" height="1.8" fill="#4a7ebb" /><rect x="234.1" y="495.2" width="5.9" height="1.8" fill="#7fbf9c" /><rect x="1006.5" y="206.5" width="14" height="14" fill="#fff" stroke="#ababab" stroke-width="1"/><path d="M1010 214.800h7l-3.500-4.100z" fill="#666" stroke="none" stroke-width="1" /><rect x="1006.5" y="221.5" width="14" height="415" fill="#fff" stroke="#ababab" stroke-width="1"/><rect x="1006" y="637" width="15" height="20" fill="#d8d8d8" /><rect x="1006.5" y="657.5" width="14" height="14" fill="#fff" stroke="#ababab" stroke-width="1"/><path d="M1010 662.800h7l-3.500 4.100z" fill="#666" stroke="none" stroke-width="1" /><rect x="615.4" y="680.2" width="1.6" height="1.6" fill="#a6a6a6" /><rect x="615.4" y="684.2" width="1.6" height="1.6" fill="#a6a6a6" /><rect x="615.4" y="688.2" width="1.6" height="1.6" fill="#a6a6a6" /><rect x="632.5" y="678.5" width="14" height="14" fill="#fff" stroke="#ababab" stroke-width="1"/><path d="M640.800 682.300v6.800l-4-3.400z" fill="#666" stroke="none" stroke-width="1" /><rect x="647.5" y="678.5" width="302" height="14" fill="#fff" stroke="#ababab" stroke-width="1"/><rect x="950" y="678" width="38" height="15" fill="#d8d8d8" /><rect x="988.5" y="678.5" width="14" height="14" fill="#fff" stroke="#ababab" stroke-width="1"/><path d="M994 682.300v6.800l4-3.400z" fill="#666" stroke="none" stroke-width="1" /><path d="M32.800 680.800v7.600l-4.600-3.800z" fill="#c0c0c0" stroke="none" stroke-width="1" /><path d="M56.800 680.800v7.600l4.600-3.800z" fill="#c0c0c0" stroke="none" stroke-width="1" /><circle cx="249" cy="684.6" r="7.4" fill="none" stroke="#6a6a6a" stroke-width="1"/><path d="M245 684.600h8M249 680.600v8" fill="none" stroke="#6a6a6a" stroke-width="1.4" /><circle cx="12.7" cy="706.8" r="3" fill="#666" stroke="none" stroke-width="1"/><rect x="16.5" y="704.2" width="5.5" height="2.4" fill="#666" /><path d="M10.500 710.300v5.400h11v-11.500" fill="none" stroke="#666" stroke-width="1" /><rect x="15.3" y="709.3" width="1.7" height="0.9" fill="#666" /><rect x="18.3" y="709.3" width="1.7" height="0.9" fill="#666" /><rect x="12.3" y="711.4" width="1.7" height="0.9" fill="#666" /><rect x="15.3" y="711.4" width="1.7" height="0.9" fill="#666" /><rect x="18.3" y="711.4" width="1.7" height="0.9" fill="#666" /><rect x="12.3" y="713.5" width="1.7" height="0.9" fill="#666" /><rect x="15.3" y="713.5" width="1.7" height="0.9" fill="#666" /><rect x="18.3" y="713.5" width="1.7" height="0.9" fill="#666" /><rect x="724" y="700" width="38" height="21" fill="#c6c6c6" /><rect x="736.5" y="703.5" width="12" height="12" fill="none" stroke="#666" stroke-width="1"/><line x1="740.5" y1="703.5" x2="740.5" y2="715.5" stroke="#666" stroke-width="1" stroke-linecap="butt"/><line x1="744.5" y1="703.5" x2="744.5" y2="715.5" stroke="#666" stroke-width="1" stroke-linecap="butt"/><line x1="736.5" y1="707.5" x2="748.5" y2="707.5" stroke="#666" stroke-width="1" stroke-linecap="butt"/><line x1="736.5" y1="711.5" x2="748.5" y2="711.5" stroke="#666" stroke-width="1" stroke-linecap="butt"/><rect x="774.5" y="703.5" width="13" height="12" fill="none" stroke="#666" stroke-width="1"/><rect x="777.5" y="705.5" width="7" height="8" fill="none" stroke="#666" stroke-width="1"/><rect x="779" y="707" width="4" height="1" fill="#666" /><rect x="779" y="709" width="4" height="1" fill="#666" /><rect x="779" y="711" width="4" height="1" fill="#666" /><rect x="812.5" y="703.5" width="13" height="12" fill="none" stroke="#666" stroke-width="1"/><path d="M816.500 703.500v7M820.500 703.500v7M812.500 710.500h8.500" fill="none" stroke="#666" stroke-width="1" /><rect x="843.3" y="709" width="5.8" height="2" fill="#555" /><rect x="853.3" y="709.6" width="100" height="1" fill="#9a9a9a" /><rect x="901" y="704" width="5" height="11" fill="#666" /><path d="M957 710h6.600M960.300 706.700v6.600" fill="none" stroke="#555" stroke-width="1.8" /></svg>
<div style="left:0px;top:0px;width:1px;height:722px;background:#217346;"></div>
<div style="left:1024px;top:0px;width:1px;height:722px;background:#217346;"></div>
<div style="left:0px;top:721px;width:1025px;height:1px;background:#217346;"></div>
<span class="t" style="left:423.96px;top:13.35px;font-size:11.8px;color:#fff;transform:scaleX(0.9974);">Удаление пустых ячеек  -  Excel</span>
<span class="t" style="left:792.57px;top:11.35px;font-size:11.8px;color:#217346;transform:scaleX(0.9749);">Вход</span>
<span class="t" style="left:16.10px;top:44.25px;font-size:12px;color:#fff;transform:scaleX(0.9888);">Файл</span>
<span class="t" style="left:142.54px;top:44.25px;font-size:12px;color:#fff;transform:scaleX(0.9568);">Вставка</span>
<span class="t" style="left:211.55px;top:44.25px;font-size:12px;color:#fff;transform:scaleX(0.9932);">Разметка страницы</span>
<span class="t" style="left:344.47px;top:44.25px;font-size:12px;color:#fff;transform:scaleX(1.0598);">Формулы</span>
<span class="t" style="left:424.49px;top:44.25px;font-size:12px;color:#fff;transform:scaleX(1.0228);">Данные</span>
<span class="t" style="left:492.54px;top:44.25px;font-size:12px;color:#fff;transform:scaleX(1.0049);">Рецензирование</span>
<span class="t" style="left:610.02px;top:44.25px;font-size:12px;color:#fff;transform:scaleX(0.9812);">Вид</span>
<span class="t" style="left:655.53px;top:44.25px;font-size:12px;color:#fff;transform:scaleX(1.0090);">Разработчик</span>
<span class="t" style="left:750.92px;top:44.25px;font-size:12px;color:#fff;transform:scaleX(0.9801);">Справка</span>
<span class="t" style="left:846.95px;top:44.25px;font-size:12px;color:#fff;transform:scaleX(1.0779);">Помощн</span>
<span class="t" style="left:934.60px;top:44.25px;font-size:12px;color:#fff;transform:scaleX(0.9840);">Поделиться</span>
<span class="t" style="left:74.02px;top:44.25px;font-size:12px;color:#217346;transform:scaleX(0.9622);">Главная</span>
<span class="t" style="left:5.80px;top:143.60px;font-size:11.3px;color:#444;transform:scaleX(0.9982);">Буфер обмена</span>
<span class="t" style="left:184.09px;top:143.60px;font-size:11.3px;color:#444;transform:scaleX(1.0602);">Шрифт</span>
<span class="t" style="left:356.24px;top:143.60px;font-size:11.3px;color:#444;transform:scaleX(1.0157);">Выравнивание</span>
<span class="t" style="left:513.46px;top:143.60px;font-size:11.3px;color:#444;transform:scaleX(0.9675);">Число</span>
<span class="t" style="left:673.96px;top:143.60px;font-size:11.3px;color:#444;transform:scaleX(0.9856);">Стили</span>
<span class="t" style="left:826.45px;top:143.60px;font-size:11.3px;color:#444;transform:scaleX(1.0789);">Ячейки</span>
<span class="t" style="left:903.72px;top:143.60px;font-size:11.3px;color:#444;transform:scaleX(1.0235);">Редактирование</span>
<span class="t" style="left:10.04px;top:108.25px;font-size:12px;color:#262626;transform:scaleX(0.9637);">Вставить</span>
<span class="t" style="left:115.33px;top:82.25px;font-size:12px;color:#262626;transform:scaleX(1.0351);">Calibri</span>
<span class="t" style="left:218.23px;top:82.25px;font-size:12px;color:#262626;transform:scaleX(0.9352);">12</span>
<span class="t" style="left:117.50px;top:111.25px;font-size:13px;color:#3b3b3b;transform:scaleX(1.0213);font-weight:bold;">Ж</span>
<span class="t" style="left:141.49px;top:111.25px;font-size:13px;color:#444;transform:scaleX(0.9504);font-weight:bold;font-style:italic;">К</span>
<span class="t" style="left:162.77px;top:111.25px;font-size:13px;color:#3b3b3b;transform:scaleX(1.0779);font-weight:bold;">Ч</span>
<span class="t" style="left:503.34px;top:74.25px;font-size:12px;color:#262626;transform:scaleX(0.9042);width:57.51px;overflow:hidden;">(все формат</span>
<span class="t" style="left:539.00px;top:95.25px;font-size:15px;color:#444;transform:scaleX(1.0259);">%</span>
<span class="t" style="left:559.48px;top:97.00px;font-size:10.5px;color:#444;transform:scaleX(0.8859);">000</span>
<span class="t" style="left:616.03px;top:74.25px;font-size:12px;color:#262626;transform:scaleX(0.9993);">Условное форматирование</span>
<span class="t" style="left:615.60px;top:97.25px;font-size:12px;color:#262626;transform:scaleX(1.0015);">Форматировать как таблицу</span>
<span class="t" style="left:615.92px;top:120.25px;font-size:12px;color:#262626;transform:scaleX(0.9892);">Стили ячеек</span>
<span class="t" style="left:824.53px;top:74.25px;font-size:12px;color:#262626;transform:scaleX(0.9516);">Вставить</span>
<span class="t" style="left:825.01px;top:97.25px;font-size:12px;color:#262626;transform:scaleX(0.9617);">Удалить</span>
<span class="t" style="left:824.58px;top:120.25px;font-size:12px;color:#262626;transform:scaleX(1.0032);">Формат</span>
<span class="t" style="left:13.01px;top:175.25px;font-size:13px;color:#262626;transform:scaleX(1.0480);">A2</span>
<span class="t" style="left:316.98px;top:176.15px;font-size:12.2px;color:#262626;transform:scaleX(1.1506);">Велосипед горный</span>
<span class="t" style="left:121.26px;top:209.10px;font-size:13.3px;color:#217346;transform:scaleX(0.9448);">A</span>
<span class="t" style="left:261.03px;top:209.10px;font-size:13.3px;color:#262626;transform:scaleX(1.0245);">B</span>
<span class="t" style="left:347.54px;top:209.10px;font-size:13.3px;color:#262626;transform:scaleX(0.9467);">C</span>
<span class="t" style="left:434.41px;top:209.10px;font-size:13.3px;color:#262626;transform:scaleX(1.0545);">D</span>
<span class="t" style="left:522.53px;top:209.10px;font-size:13.3px;color:#262626;transform:scaleX(0.8960);">E</span>
<span class="t" style="left:609.02px;top:209.10px;font-size:13.3px;color:#262626;transform:scaleX(0.9156);">F</span>
<span class="t" style="left:695.12px;top:209.10px;font-size:13.3px;color:#262626;transform:scaleX(0.9554);">G</span>
<span class="t" style="left:782.36px;top:209.10px;font-size:13.3px;color:#262626;transform:scaleX(1.0966);">H</span>
<span class="t" style="left:872.35px;top:209.10px;font-size:13.3px;color:#262626;transform:scaleX(1.0000);">I</span>
<span class="t" style="left:957.77px;top:209.10px;font-size:13.3px;color:#262626;transform:scaleX(0.7874);">J</span>
<span class="t" style="left:10.21px;top:229.25px;font-size:14px;color:#262626;transform:scaleX(1.0656);">1</span>
<span class="t" style="left:11.44px;top:250.25px;font-size:14px;color:#217346;transform:scaleX(1.0365);">2</span>
<span class="t" style="left:11.43px;top:271.25px;font-size:14px;color:#217346;transform:scaleX(1.0348);">3</span>
<span class="t" style="left:11.49px;top:292.25px;font-size:14px;color:#217346;transform:scaleX(0.8848);">4</span>
<span class="t" style="left:10.99px;top:313.25px;font-size:14px;color:#217346;transform:scaleX(1.0384);">5</span>
<span class="t" style="left:11.24px;top:334.25px;font-size:14px;color:#217346;transform:scaleX(1.0354);">6</span>
<span class="t" style="left:11.37px;top:355.25px;font-size:14px;color:#217346;transform:scaleX(1.0382);">7</span>
<span class="t" style="left:10.61px;top:376.25px;font-size:14px;color:#217346;transform:scaleX(1.0265);">8</span>
<span class="t" style="left:11.30px;top:397.25px;font-size:14px;color:#217346;transform:scaleX(1.0397);">9</span>
<span class="t" style="left:6.98px;top:418.25px;font-size:14px;color:#217346;transform:scaleX(0.9470);">10</span>
<span class="t" style="left:6.92px;top:439.25px;font-size:14px;color:#217346;transform:scaleX(1.0200);">11</span>
<span class="t" style="left:6.98px;top:460.25px;font-size:14px;color:#217346;transform:scaleX(0.9487);">12</span>
<span class="t" style="left:6.98px;top:481.25px;font-size:14px;color:#262626;transform:scaleX(0.9484);">13</span>
<span class="t" style="left:7.00px;top:502.25px;font-size:14px;color:#262626;transform:scaleX(0.9298);">14</span>
<span class="t" style="left:6.98px;top:523.25px;font-size:14px;color:#262626;transform:scaleX(0.9475);">15</span>
<span class="t" style="left:6.98px;top:544.25px;font-size:14px;color:#262626;transform:scaleX(0.9479);">16</span>
<span class="t" style="left:6.98px;top:565.25px;font-size:14px;color:#262626;transform:scaleX(0.9487);">17</span>
<span class="t" style="left:6.98px;top:586.25px;font-size:14px;color:#262626;transform:scaleX(0.9484);">18</span>
<span class="t" style="left:6.98px;top:607.25px;font-size:14px;color:#262626;transform:scaleX(0.9484);">19</span>
<span class="t" style="left:7.18px;top:628.25px;font-size:14px;color:#262626;transform:scaleX(0.9152);">20</span>
<span class="t" style="left:8.19px;top:649.25px;font-size:14px;color:#262626;transform:scaleX(0.9147);">21</span>
<span class="t" style="left:31.98px;top:251.00px;font-size:13.5px;color:#0a6b1c;transform:scaleX(1.1124);">Велосипед горный</span>
<span class="t" style="left:31.99px;top:272.00px;font-size:13.5px;color:#006100;transform:scaleX(1.1011);">Велосипед спортивный</span>
<span class="t" style="left:31.98px;top:293.00px;font-size:13.5px;color:#006100;transform:scaleX(1.0870);">Груша боксерская</span>
<span class="t" style="left:30.99px;top:314.00px;font-size:13.5px;color:#006100;transform:scaleX(1.1110);">Упоры для отжимания</span>
<span class="t" style="left:32.00px;top:335.00px;font-size:13.5px;color:#006100;transform:scaleX(1.1166);">Турник в дверной проем</span>
<span class="t" style="left:112.80px;top:678.00px;font-size:13.5px;color:#217346;transform:scaleX(0.9519);font-weight:bold;">microexcel.ru</span>
<span class="t" style="left:631.75px;top:703.60px;font-size:11.3px;color:#3b3b3b;transform:scaleX(1.0215);">Количество: 5</span>
<span class="t" style="left:974.36px;top:703.60px;font-size:11.3px;color:#3b3b3b;transform:scaleX(0.9564);">100 %</span>
</div></body></html>
